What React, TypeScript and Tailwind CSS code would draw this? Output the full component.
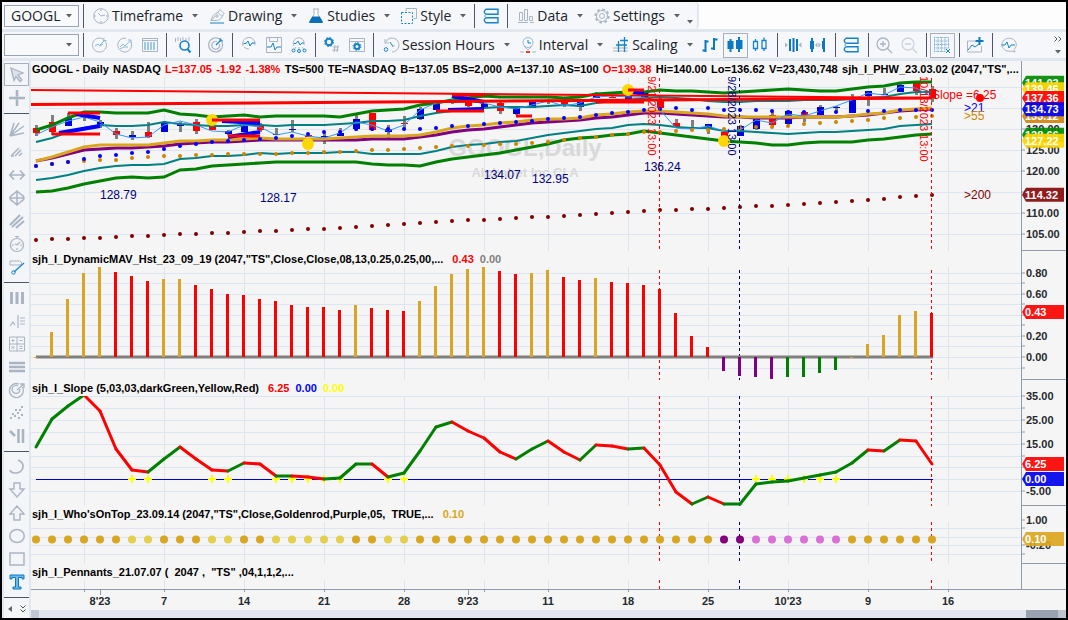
import React from "react";

const GREY = "#aab5c4";
const BLUE = "#1583c9";

// bars are 16px apart
const X = (i: number) => 5 + 16 * i;
const BARS = Array.from({ length: 57 }, (_, i) => i);
const GRID = [3, 8, 13, 18, 23, 28, 32, 37, 42, 47, 52, 57];

const upperGreen = [130, 125, 118, 112, 112, 113, 113, 113, 110, 114, 115, 117, 116, 115, 117, 116, 116, 116, 116, 117, 114, 111, 110, 109, 105, 103, 100, 98, 96, 97, 97, 97, 97, 98, 97, 94, 93, 92, 92, 90, 91, 91, 92, 93, 92, 91, 90, 89, 90, 91, 91, 89, 87, 86, 83, 82, 82];
const upperTeal = [142, 138, 132, 128, 125, 126, 126, 125, 122, 124, 125, 126, 126, 125, 125, 126, 125, 125, 125, 124, 123, 121, 121, 120, 116, 113, 111, 109, 108, 107, 107, 107, 106, 105, 106, 103, 101, 100, 98, 97, 98, 99, 101, 102, 102, 101, 101, 101, 100, 100, 100, 99, 98, 97, 94, 92, 92];
const gold = [161, 157, 152, 147, 145, 145, 145, 145, 143, 141, 141, 140, 140, 139, 138, 139, 139, 139, 139, 138, 137, 136, 136, 136, 135, 132, 128, 126, 125, 123, 122, 120, 119, 119, 118, 115, 114, 112, 111, 111, 112, 113, 114, 116, 117, 117, 117, 117, 117, 117, 117, 116, 114, 113, 110, 109, 108];
const purple = [161, 158, 154, 150, 149, 148, 148, 147, 146, 144, 143, 142, 142, 141, 140, 140, 140, 140, 140, 140, 140, 139, 139, 139, 137, 135, 132, 130, 129, 127, 125, 123, 122, 121, 120, 118, 117, 115, 113, 113, 114, 115, 116, 117, 117, 118, 118, 118, 117, 117, 117, 116, 115, 113, 111, 110, 109];
const lowerTeal = [180, 178, 175, 171, 168, 166, 165, 165, 164, 159, 158, 156, 156, 155, 153, 154, 153, 153, 153, 152, 152, 154, 154, 154, 154, 151, 147, 145, 144, 142, 141, 138, 135, 133, 131, 129, 128, 125, 124, 125, 127, 128, 128, 131, 131, 132, 133, 134, 133, 132, 132, 131, 130, 129, 126, 125, 124];
const lowerGreen = [192, 191, 188, 184, 181, 178, 177, 178, 177, 170, 169, 166, 165, 164, 163, 162, 162, 162, 162, 162, 162, 164, 165, 165, 166, 162, 159, 157, 155, 153, 150, 147, 144, 140, 138, 137, 135, 134, 131, 133, 135, 137, 139, 141, 142, 143, 145, 145, 143, 142, 142, 142, 140, 139, 137, 135, 134];
const closeLine = [135, 127, 121, 117, 122, 134, 138, 137, 125, 121, 125, 131, 132, 125, 127, 135, 132, 136, 138, 133, 122, 125, 131, 125, 110, 103, 100, 101, 103, 107, 109, 105, 101, 106, 103, 97, 96, 97, 97, 110, 128, 129, 126, 131, 130, 120, 123, 114, 116, 111, 106, 100, 93, 95, 87, 88, 97];
const dots21 = [166, 164, 162, 159, 156, 155, 153, 152, 149, 146, 144, 142, 141, 140, 139, 138, 136, 134, 132, 132, 129, 129, 129, 129, 129, 128, 126, 126, 124, 123, 122, 121, 119, 118, 117, 115, 113, 112, 110, 109, 108, 110, 108, 110, 110, 110, 111, 112, 112, 112, 112, 111, 111, 111, 110, 110, 110];
const dots55 = [166, 164, 162, 161, 160, 160, 158, 157, 156, 156, 155, 155, 154, 154, 154, 154, 153, 153, 152, 152, 151, 150, 150, 149, 148, 147, 146, 146, 145, 144, 144, 143, 142, 140, 138, 137, 135, 134, 132, 132, 131, 130, 130, 129, 128, 127, 127, 126, 124, 123, 122, 121, 120, 118, 118, 117, 116];
const dots200 = [240, 239, 239, 238, 238, 237, 236, 236, 235, 234, 234, 233, 233, 232, 231, 231, 230, 229, 229, 228, 227, 226, 225, 224, 223, 222, 221, 220, 220, 219, 218, 217, 217, 216, 215, 214, 213, 212, 211, 210, 210, 209, 209, 208, 207, 206, 206, 205, 204, 203, 202, 201, 200, 199, 197, 196, 195];

// [bar, up?, body top, body bottom, wick top, wick bottom]
const candles: number[][] = [
  [0, 0, 128, 133, 125, 136], [1, 0, 122, 132, 115, 135], [2, 1, 118, 126, 113, 126], [3, 0, 114, 116, 113, 121],
  [4, 1, 122, 125, 120, 128], [5, 0, 131, 135, 128, 139], [6, 1, 135, 137, 131, 140], [7, 0, 132, 137, 122, 138],
  [8, 1, 123, 132, 121, 132], [9, 1, 124, 126, 122, 132], [10, 0, 122, 131, 119, 134], [11, 0, 125, 130, 125, 130],
  [12, 1, 131, 134, 130, 135], [13, 1, 125, 132, 125, 132], [14, 0, 125, 130, 123, 132], [15, 1, 134, 135, 128, 135],
  [16, 1, 129, 130, 120, 132], [17, 0, 135, 137, 134, 137], [18, 1, 136, 137, 133, 144], [19, 1, 133, 136, 128, 136],
  [20, 1, 119, 129, 113, 131], [21, 0, 113, 130, 113, 131], [22, 1, 129, 132, 125, 140], [23, 0, 123, 124, 116, 130],
  [24, 1, 109, 119, 107, 120], [25, 1, 104, 110, 103, 110], [26, 1, 101, 103, 99, 104], [27, 0, 101, 106, 100, 107],
  [28, 1, 104, 107, 103, 107], [29, 0, 103, 111, 102, 114], [30, 1, 107, 114, 106, 115], [31, 1, 102, 108, 100, 108],
  [32, 0, 100, 102, 99, 104], [33, 0, 100, 104, 99, 107], [34, 1, 102, 107, 100, 111], [35, 1, 96, 98, 92, 98],
  [36, 0, 97, 98, 96, 98], [37, 1, 96, 99, 95, 100], [38, 1, 92, 97, 91, 98], [39, 0, 99, 108, 98, 110],
  [40, 0, 123, 127, 119, 127], [41, 0, 127, 129, 120, 129], [42, 1, 124, 128, 124, 134], [43, 0, 132, 137, 132, 137],
  [44, 1, 126, 136, 125, 136], [45, 1, 119, 129, 118, 130], [46, 0, 115, 125, 112, 127], [47, 1, 111, 124, 110, 125],
  [48, 0, 112, 115, 111, 122], [49, 1, 107, 115, 105, 115], [50, 1, 107, 108, 106, 113], [51, 1, 100, 113, 94, 113],
  [52, 1, 91, 96, 91, 106], [53, 1, 94, 95, 88, 95], [54, 1, 85, 92, 84, 92], [55, 0, 83, 91, 83, 95], [56, 0, 89, 98, 86, 102],
];

// histogram bar ends, zero line sits at 357
const hist = [357, 332, 299, 273, 266, 272, 276, 281, 279, 279, 285, 289, 294, 295, 299, 301, 305, 307, 307, 310, 305, 308, 310, 311, 301, 286, 274, 269, 266, 271, 274, 273, 270, 277, 280, 278, 282, 283, 285, 289, 313, 336, 347, 371, 376, 377, 379, 377, 377, 373, 370, 357, 344, 335, 315, 311, 313];
const histColors = "ggggg" + "rrr" + "gg" + "rrrrrrrrrr" + "g" + "rrr" + "ggggg" + "rr" + "gg" + "rr" + "g" + "rrrrrrr" + "pppp" + "dddd" + "ggggg" + "r";
const COLORS: Record<string, string> = { g: "#daa520", r: "#ff0000", p: "#800080", d: "#008000" };

const slope = [447, 419, 406, 395, 411, 449, 470, 472, 459, 447, 459, 470, 471, 463, 464, 476, 476, 477, 479, 478, 464, 464, 477, 473, 451, 427, 422, 431, 438, 452, 459, 449, 441, 452, 460, 445, 446, 449, 448, 465, 492, 504, 497, 504, 504, 484, 482, 481, 478, 475, 472, 463, 450, 451, 440, 441, 464];
const weak = [6, 7, 11, 12, 15, 16, 17, 18, 19, 22, 23];
const crosses = [...weak, 45, 46, 47, 48, 49, 50];

const line = (ys: number[]) => ys.map((y, i) => `${X(i)},${y}`).join(" ");
const priceY = (p: number) => 150 + (125 - p) * 4.2;

function topColor(i: number) {
  if (weak.includes(i)) return "#e4d04e";
  if (i === 43 || i === 44) return "#800080";
  if (i >= 45 && i <= 50) return "#da70d6";
  return "#daa520";
}

const icons: Record<string, React.ReactNode> = {
  clock: (
    <g fill="none" stroke={GREY}>
      <circle cx="8" cy="8" r="7.3" />
      <path d="M8 1v2M8 13v2M1 8h2M13 8h2M5 5l3 3 4-1" />
    </g>
  ),
  pen: (
    <g fill="none" stroke={GREY}>
      <path d="M2 12.5c1-4 3-7 7-8l4 4c-1 3-3 4-7 4zM9 4.500l2-3 4 4-2 3M2 12.500l5-5" />
      <circle cx="8" cy="8" r="1.200" />
      <path d="M1 15h14" stroke={BLUE} />
    </g>
  ),
  flask: (
    <g>
      <path d="M5 1h6M6 1v5.500L2 14h12l-4-7.500V1" fill="#fff" stroke={GREY} />
      <path d="M4.300 8.500h7.400L15 14q0 1-1 1H2q-1 0-1-1z" fill="#0a6fb8" />
    </g>
  ),
  style: (
    <g fill="none">
      <path d="M5 3.500V.5h10.500v10h-3" stroke={GREY} />
      <path d="M.5 4.500h11v11H.5z" stroke={BLUE} strokeDasharray="2 1.500" />
    </g>
  ),
  stack: (
    <g fill="none" stroke={BLUE} strokeWidth="1.400">
      <path d="M3 1.200h12v5H3Q-.5 3.700 3 1.200zM3 9.800h12v5H3Q-.5 12.300 3 9.800z" />
      <path d="M3 6.200Q1 8 3 9.800" stroke="#7fb9de" />
    </g>
  ),
  data: (
    <g fill="none" stroke={GREY}>
      <path d="M1.500 12.500v-8h3v8zM6.500 12.500v-11h3v11zM11.500 12.500v-4h3v4zM0 14.500h10M12 14.500h4" />
    </g>
  ),
  gear: (
    <g fill="none" stroke={GREY}>
      <circle cx="8" cy="8" r="6.600" strokeWidth="2" strokeDasharray="2.600 2.580" />
      <circle cx="8" cy="8" r="5.500" />
      <circle cx="8" cy="8" r="2.500" />
    </g>
  ),
  target: (
    <g fill="none" stroke={GREY}>
      <path d="M13.500 4.500A7 7 0 1 1 11 2" />
      <path d="M3 9l3-2 2 2 3-2" stroke="#7fb9de" />
      <path d="M8 8l5-5M12 1l-.5 3 3-.5" stroke="#7fb9de" />
    </g>
  ),
  trend: (
    <g fill="none" stroke={GREY}>
      <path d="M14 5A7 7 0 1 1 9 1.200" />
      <path d="M3 10l3-3 2 2 6-6M11 3h3v3M3 12l4-2 4 0" stroke="#8cbddd" />
    </g>
  ),
  table: (
    <g fill="none" stroke={GREY}>
      <path d="M.5 1.500h15v13H.5zM.5 3.500h15" />
      <path d="M2 6h12M2 8h12M2 10h12M2 12h12" stroke="#7fb9de" strokeWidth="1.300" strokeDasharray="2 1" />
    </g>
  ),
  search: (
    <g fill="none">
      <path d="M.5 1v4M3 0v4M5.500 1v3M8 0v3M11 1v3M14 0v4" stroke={GREY} />
      <circle cx="9.500" cy="8.500" r="4.500" stroke={BLUE} strokeWidth="1.600" />
      <path d="M12.500 12l3 3.500" stroke={BLUE} strokeWidth="2" />
    </g>
  ),
  scope: (
    <g fill="none" stroke={GREY} strokeWidth="1.200">
      <path d="M14 5A7 7 0 1 1 11 1.800M11.500 7A4 4 0 1 1 9 4.500" />
      <path d="M8 8l5.500-5.500M12 1l0 3 3 0" stroke={BLUE} />
    </g>
  ),
  pulse: (
    <g fill="none">
      <path d="M2 9a6.300 6.300 0 1 1 12-1M3 10q2 2 5 2" stroke={GREY} />
      <path d="M2.500 6.500H5L7 4l2 5 2-3h3" stroke={BLUE} />
    </g>
  ),
  chartBox: (
    <g fill="none">
      <path d="M.5.500h15v15H.5zM3.500.500v4h8v-4" stroke={GREY} />
      <path d="M1 10h4l2-4 2 7 2-3h4" stroke={BLUE} />
    </g>
  ),
  network: (
    <g fill="none">
      <path d="M3 9a5.500 5.500 0 1 1 10-1M8 10v3M5 10l-2 3M11 10l2 3" stroke={GREY} />
      <path d="M3 6.500h2L7 4l2 4 2-2h2" stroke={BLUE} />
      <g stroke={BLUE}><circle cx="2.500" cy="13.500" r="1.500" /><circle cx="8" cy="14" r="1.500" /><circle cx="13.500" cy="13.500" r="1.500" /></g>
    </g>
  ),
  gearHash: (
    <g fill="none">
      <circle cx="5" cy="5" r="3.200" stroke={BLUE} strokeWidth="2" />
      <circle cx="5" cy="5" r="4.500" stroke={BLUE} strokeDasharray="1.800 1.730" />
      <path d="M11 8l-1 7M14 8l-1 7M9 10h6M8.500 13h6" stroke={GREY} />
    </g>
  ),
  gearBox: (
    <g fill="none">
      <path d="M.5 1.500h15v13H.5zM.5 4.500h15" stroke={GREY} />
      <circle cx="8" cy="9.500" r="2.500" stroke={BLUE} strokeWidth="2" />
      <circle cx="8" cy="9.500" r="3.900" stroke={BLUE} strokeDasharray="1.500 1.560" />
    </g>
  ),
  session: (
    <g fill="none" stroke={GREY}>
      <path d="M2 2v4h4M2.500 5.500A7 7 0 1 1 9 15" />
      <path d="M7 5l3 4.500 1-1" stroke={BLUE} />
      <circle cx="3" cy="12.500" r="1.800" stroke={BLUE} />
    </g>
  ),
  interval: (
    <g fill="none">
      <circle cx="8" cy="5.500" r="5" stroke="#9dbad0" />
      <path d="M8 3v3h3" stroke={BLUE} />
      <path d="M4 9l4 4 4-4M0 15h4M12 15h4" stroke={GREY} />
      <path d="M6 15h4" stroke="#e04030" strokeWidth="2" />
    </g>
  ),
  scaling: (
    <g fill="none" stroke={GREY}>
      <path d="M0 11h15M0 14h15" />
      <path d="M5.500 4v11M11.500 0v15M3 8h11M7 3.500h8" stroke={BLUE} strokeWidth="1.300" />
    </g>
  ),
  bars: <path d="M3.500 3v12M.5 13.500h3M3.500 4.500h3M12 1v12M9 11.500h3M12 2.500h3.500" stroke="#0a78c2" strokeWidth="2" fill="none" />,
  candlesSolid: <path d="M.5 4h2V2h2v2h2v8h-2v3h-2v-3h-2zM9 3h2V0h2v3h2.500v9H13v3h-2v-3H9z" fill="#0a78c2" />,
  candlesHollow: <path d="M1.500 4.500h4v7h-4zM3.500 2v2.500M3.500 11.500V14M10 3.500h4v8h-4zM12 .5v3M12 11.500V14" stroke={BLUE} fill="none" strokeWidth="1.300" />,
  squeeze: (
    <g fill="#0a78c2">
      <path d="M4 2h2v12H4zM7.500 1h2v14h-2zM11 2h2v12h-2z" />
      <path d="M0 5.500L3 8l-3 2.500zM16.500 5.500l-3 2.500 3 2.500z" fill={GREY} />
    </g>
  ),
  expand: (
    <g fill="#0a78c2">
      <path d="M1 1h2v3h1v8H3v3H1v-3H0V4h1zM13 1h2v14h-2v-3h-1V4h1z" />
      <path d="M5 8l2.500-2.500v5zM11 8L8.500 5.500v5z" fill={GREY} />
    </g>
  ),
  zoomIn: <path d="M13 7A6 6 0 1 1 1 7a6 6 0 0 1 12 0zM11.500 11.500L16 16M4 7h6M7 4v6" stroke={GREY} strokeWidth="1.300" fill="none" />,
  zoomOut: <path d="M13 7A6 6 0 1 1 1 7a6 6 0 0 1 12 0zM11.500 11.500L16 16M4 7h6" stroke="#ccd3dc" strokeWidth="1.300" fill="none" />,
  gridBox: (
    <g fill="none" strokeDasharray="1.500 .5">
      <path d="M0 .5h15M0 4h15M0 7.500h15M0 11h15M0 14.500h11M.5 0v15M4 0v15M7.500 0v15M11 0v15M14.500 0v11" stroke="#8db9da" />
      <path d="M12 12l4 4M16 12l-4 4" stroke={BLUE} strokeDasharray="none" />
    </g>
  ),
  addChart: (
    <g fill="none">
      <path d="M.5 4v11h14V9M.5 4h8" stroke={GREY} />
      <path d="M1 13l4-5 3 2 4-3" stroke={BLUE} />
      <path d="M12.500 0v8M8.500 4h8" stroke="#0a78c2" strokeWidth="2" />
    </g>
  ),
  bubble: (
    <g fill="none">
      <path d="M14 12.500A7.200 6.500 0 1 0 11 14l4 1z" stroke={GREY} />
      <path d="M1.500 8H5l2-3 2 6 2-3h4" stroke={BLUE} />
    </g>
  ),
  pointer: <path d="M2 1l12 5-5 2 4 5-2 1.500-4-5-2 4z" fill="#dde2ea" stroke={GREY} strokeWidth="1.300" />,
  plus: <path d="M8 0v6.500M8 9.500V16M0 8h6.500M9.500 8H16M6.500 8h3" stroke={GREY} strokeWidth="2.600" />,
  fan: <path d="M1 15L5 2M1 15L10 2M1 15L15 5M1 15l14-3" stroke={GREY} strokeWidth="1.500" fill="none" />,
  speed: <path d="M2 12l8-8M6 12l6-6M10 12l3-3M2 12h3" stroke={GREY} strokeWidth="1.500" fill="none" />,
  horiz: <path d="M1 8h14M5 3.500L.8 8 5 12.500M11 3.500L15.200 8 11 12.500" stroke={GREY} strokeWidth="1.700" fill="none" />,
  vert: <path d="M8 1v14M4 4.500L8 1l4 3.500M4 11.500L8 15l4-3.500M4 4.500Q1 6 1 8h14q0-2-3-3.500M1 8q0 2 3 3.500M15 8q0 2-3 3.500" stroke={GREY} strokeWidth="1.500" fill="none" />,
  parallel: <path d="M1 12L11 2M3 14L14 4M7 15l8-7" stroke={GREY} strokeWidth="2" fill="none" />,
  stopwatch: <path d="M8 2.500a6.500 6.500 0 1 1-.1 0M8 0v3M6 .5h4M8 9l3-3M3 9h2M11 9h2M8 12v2M6 8l2 1" stroke={GREY} strokeWidth="1.200" fill="none" />,
  marker: (
    <g fill="none">
      <path d="M1 2h10l2 2-2 2H1z" stroke={GREY} />
      <path d="M15 4L5 13" stroke={BLUE} strokeWidth="1.300" />
      <circle cx="4.500" cy="13.500" r="1.700" stroke={BLUE} />
    </g>
  ),
  columns: <path d="M2.500 2v12M8 2v12M13.500 2v12" stroke={GREY} strokeWidth="3" />,
  waves: <path d="M1 13l3-4 2 3M9 2v13M11 5h5M11 8h5M11 11h5" stroke={GREY} strokeWidth="1.200" fill="none" />,
  calc: <path d="M.5 1h15v14H.5zM8 1v14M.5 8h15M2.500 4.500h3M4 3v3M10.500 4.500h3M2.500 10l3 3M5.500 10l-3 3M10.500 10.500h3M10.500 12.500h3" stroke={GREY} fill="none" />,
  rows: <path d="M0 4h16M0 8h16M0 12h16" stroke={GREY} strokeWidth="2.300" />,
  arcs: <path d="M13.500 5A7 7 0 1 1 10 2M11 7a4 4 0 1 1-2-3M8 8l7-6M11 2h4v4" stroke={GREY} strokeWidth="1.300" fill="none" />,
  scatter: <path d="M1 13h2M5 11h2M9 13h2M3 9h2M8 8h2M12 10h2M6 5h2M10 5h2M12 2h2" stroke={GREY} strokeWidth="2" />,
  slashBars: <path d="M1 3l5 5M9.500 1v14M14 1v14" stroke={GREY} strokeWidth="2.500" />,
  arc: <path d="M9 1c8 3 6 13-3 13q-4 0-5-3" stroke={GREY} strokeWidth="1.700" fill="none" />,
  down: <path d="M5 1h6v6h4l-7 8-7-8h4z" stroke={GREY} strokeWidth="1.400" fill="none" />,
  up: <path d="M5 15h6V9h4L8 1 1 9h4z" stroke={GREY} strokeWidth="1.400" fill="none" />,
  ellipse: <ellipse cx="8" cy="8" rx="7.200" ry="6.500" stroke={GREY} strokeWidth="1.500" fill="none" />,
  rect: <path d="M1 2h14v12H1z" stroke={GREY} strokeWidth="1.500" fill="none" />,
  type: <path d="M1 1h14v4h-2V3.500H9.500V13H12v2H4v-2h2.500V3.500H3V5H1z" fill="#6db8ea" stroke="#0a78c2" />,
};

function Icon({ name }: { name: string }) {
  return (
    <svg width="16" height="16" viewBox="0 0 16 16" className="shrink-0 overflow-visible" aria-hidden="true">
      {icons[name]}
    </svg>
  );
}

function Caret() {
  return (
    <svg width="6" height="4" viewBox="0 0 6 4" className="shrink-0" aria-hidden="true">
      <path d="M0 0h6L3 3.500z" fill="#5b6068" />
    </svg>
  );
}

function MenuButton({ icon, label }: { icon: string; label: string }) {
  return (
    <button className="flex h-full items-center whitespace-nowrap text-sm text-[#20242a]">
      <Icon name={icon} />
      <span className="ml-[3px] mr-[9px]">{label}</span>
      <Caret />
    </button>
  );
}

function IconButton({ icon, active }: { icon: string; active?: boolean }) {
  return (
    <button
      aria-label={icon}
      className={`flex h-[25px] w-[25px] shrink-0 items-center justify-center ${active ? "border border-[#a5afbd]" : ""}`}
    >
      <Icon name={icon} />
    </button>
  );
}

function Divider() {
  return <span className="ml-1 mr-[3px] h-6 w-px shrink-0 bg-[#4c5666]" />;
}

function Combo({ label, value }: { label: string; value: string }) {
  return (
    <div className="relative ml-[2px] h-[22px] w-[75px] shrink-0">
      <select
        aria-label={label}
        defaultValue={value}
        className="block h-full w-full appearance-none border border-[#9aa3b1] bg-[#f8f9fb] pl-[6px] text-sm leading-5 text-[#20242a]"
      >
        <option>{value}</option>
      </select>
      <span className="pointer-events-none absolute right-[7px] top-[9px] flex">
        <Caret />
      </span>
    </div>
  );
}

function Title({ children }: { children: React.ReactNode }) {
  return <div className="flex h-4 items-center whitespace-pre pl-px text-[11px] font-bold text-black">{children}</div>;
}

function GridLines({ rows = [] }: { rows?: number[] }) {
  return (
    <g stroke="#dde5f2" shapeRendering="crispEdges">
      {rows.map((y) => (
        <line key={y} x1="0" x2="100%" y1={y} y2={y} />
      ))}
      {GRID.map((i) => (
        <line key={i} x1={X(i)} x2={X(i)} y1="0" y2="620" />
      ))}
    </g>
  );
}

function Sessions() {
  return (
    <g strokeDasharray="3 3" strokeWidth="1">
      <line x1={X(39) - 0.5} x2={X(39) - 0.5} y1="0" y2="620" stroke="#f00" />
      <line x1={X(44) - 0.5} x2={X(44) - 0.5} y1="0" y2="620" stroke="#000080" />
      <line x1={X(56) - 0.5} x2={X(56) - 0.5} y1="0" y2="620" stroke="#f00" />
    </g>
  );
}

interface AxisProps {
  top: number;
  height: number;
  ticks: [number, string][];
  flags?: [number, string, string][];
}

function Axis({ top, height, ticks, flags = [] }: AxisProps) {
  return (
    <div className="w-[45px] shrink-0 overflow-hidden border-b border-l border-[#8f9aab]">
      <svg height={height - 1} className="block w-full text-[11px] font-bold">
        <g transform={`translate(0 ${-top})`}>
          {ticks.map(([y, label]) => (
            <g key={y}>
              <line x1="0" x2="3" y1={y} y2={y} stroke="#8f9aab" />
              <text x="4" y={y + 4} fill="#26292e">{label}</text>
            </g>
          ))}
          {flags.map(([y, label, color]) => (
            <g key={label}>
              <path d={`M0 ${y}l4-7h38v14H4z`} fill={color} opacity=".92" />
              <text x="3" y={y + 4} fill="#fff">{label}</text>
            </g>
          ))}
        </g>
      </svg>
    </div>
  );
}

function Dots({ ys, color, r = 2 }: { ys: number[]; color: string; r?: number }) {
  return (
    <g fill={color}>
      {ys.map((y, i) => (
        <circle key={i} cx={X(i)} cy={y} r={r} />
      ))}
    </g>
  );
}

function PricePane() {
  return (
    <section className="flex">
      <div className="min-w-0 flex-1 overflow-hidden">
        <Title>
          <div className="flex w-full justify-between gap-[4px] pr-[2px]">
            <span>GOOGL - Daily</span>
            <span>NASDAQ</span>
            <span className="text-[#f00]">L=137.05</span>
            <span className="text-[#f00]">-1.92</span>
            <span className="text-[#f00]">-1.38%</span>
            <span>TS=500</span>
            <span>TE=NASDAQ</span>
            <span>B=137.05</span>
            <span>BS=2,000</span>
            <span>A=137.10</span>
            <span>AS=100</span>
            <span className="text-[#f00]">O=139.38</span>
            <span>Hi=140.00</span>
            <span>Lo=136.62</span>
            <span>V=23,430,748</span>
            <span>sjh_I_PHW_23.03.02 (2047,"TS",...</span>
          </div>
        </Title>
        <svg className="block h-[174px] w-full text-xs">
          <g transform="translate(0 -77)">
            <GridLines rows={[87, 108, 129, 150, 171, 192, 213, 234]} />
            <g fill="#d9d9d9" fontWeight="bold" textAnchor="middle">
              <text x="494" y="156" fontSize="24">GOOGL,Daily</text>
              <text x="494" y="177" fontSize="13">Alphabet Inc Cl A</text>
            </g>
            {candles.map(([i, up, t, b, wt, wb]) => (
              <g key={i}>
                <rect x={X(i) - 1} y={wt} width="3" height={wb - wt} fill="#808080" />
                <rect x={X(i) - 3} y={t} width="7" height={b - t} fill={up ? "#0000dc" : "#f00"} />
              </g>
            ))}
            <g fill="none">
              <polyline points={line(upperGreen)} stroke="#008000" strokeWidth="3" />
              <polyline points={line(upperTeal)} stroke="#008080" strokeWidth="2" />
              <polyline points={line(lowerTeal)} stroke="#008080" strokeWidth="2" />
              <polyline points={line(lowerGreen)} stroke="#008000" strokeWidth="3" />
              <polyline points={line(purple)} stroke="#800080" strokeWidth="3" />
              <polyline points={line(gold)} stroke="#daa520" strokeWidth="3" />
              <polyline points={line(closeLine)} stroke="#3398ff" strokeWidth="1" />
            </g>
            <g stroke="#0000ff" strokeWidth="4">
              <path d="M45 114L69 118M28 133L69 126M191 121L229 123M197 137L229 132M421 96L453 102M417 110L453 109M597 91L613 94" />
            </g>
            <g stroke="#f00" strokeWidth="3">
              <path d="M37 113H69M21 134H69M197 136H229M421 95H453M405 111H453M485 116H501M565 102H613" />
              <path d="M0 104.500L901 98" />
              <path d="M0 90L901 98" strokeWidth="2" />
            </g>
            <Dots ys={dots55} color="#cd8500" />
            <Dots ys={dots21} color="#0000ff" />
            <Dots ys={dots200} color="#800000" />
            <g fill="#ffd700">
              <circle cx="181" cy="120" r="6" />
              <circle cx="277" cy="144" r="6" />
              <circle cx="597" cy="90" r="6" />
              <circle cx="693" cy="141" r="6" />
            </g>
            <path d="M181 120H229M597 90H613" stroke="#f00" strokeWidth="3" />
            <Sessions />
            <g fontSize="11">
              <text transform="translate(617 76) rotate(90)" fill="#f00">9/21/2023 13:00</text>
              <text transform="translate(697 76) rotate(90)" fill="#000080">9/28/2023 13:00</text>
              <text transform="translate(889 76) rotate(90)" fill="#f00">10/13/2023 13:00</text>
            </g>
            <g fill="#000080">
              <text x="69" y="199">128.79</text>
              <text x="229" y="202">128.17</text>
              <text x="453" y="179">134.07</text>
              <text x="501" y="183">132.95</text>
              <text x="613" y="171">136.24</text>
            </g>
            <circle cx="949" cy="98" r="4" fill="#f00" />
            <text x="901" y="99" fill="#f00">Slope =6.25</text>
            <text x="933" y="112" fill="#0000ff">&gt;21</text>
            <text x="933" y="120" fill="#cd8500">&gt;55</text>
            <text x="933" y="199" fill="#800000">&gt;200</text>
          </g>
        </svg>
      </div>
      <Axis
        top={61}
        height={190}
        ticks={[[129, "130.00"], [150, "125.00"], [171, "120.00"], [192, ""], [213, "110.00"], [234, "105.00"]]}
        flags={[
          [priceY(133.12), "133.12", "#cd850e"],
          [priceY(141.03), "141.03", "#008a00"],
          [priceY(139.46), "139.46", "#ffd700"],
          [priceY(137.36), "137.36", "#ff0000"],
          [priceY(134.73), "134.73", "#0000ee"],
          [priceY(128.66), "128.66", "#008a00"],
          [priceY(127.22), "127.22", "#ffd700"],
          [priceY(114.32), "114.32", "#870a0a"],
        ]}
      />
    </section>
  );
}

function HistogramPane() {
  const rows = [273, 283, 294, 304, 315, 325, 336, 346, 357, 368];
  const labels: Record<number, string> = { 273: "0.80", 294: "0.60", 336: "0.20", 357: "0.00" };
  return (
    <section className="flex">
      <div className="min-w-0 flex-1 overflow-hidden">
        <Title>
          sjh_I_DynamicMAV_Hst_23_09_19 (2047,"TS",Close,Close,08,13,0.25,0.25,00,...
          <span className="ml-[9px] text-[#f00]">0.43</span>
          <span className="ml-[6px] text-[#808080]">0.00</span>
        </Title>
        <svg className="block h-[113px] w-full">
          <g transform="translate(0 -267)">
            <GridLines rows={rows} />
            <Sessions />
            <path d="M5 357H902" stroke="#808080" strokeWidth="3" />
            {BARS.map((i) => (
              <rect
                key={i}
                x={X(i) - 2}
                y={Math.min(hist[i], 357)}
                width="3"
                height={Math.max(Math.abs(hist[i] - 357), 1)}
                fill={COLORS[histColors[i]]}
              />
            ))}
          </g>
        </svg>
      </div>
      <Axis top={251} height={129} ticks={rows.map((y) => [y, labels[y] ?? ""])} flags={[[312, "0.43", "#ff0000"]]} />
    </section>
  );
}

function SlopePane() {
  const rows = [396, 408, 420, 432, 444, 456, 467, 479, 491];
  const labels: Record<number, string> = { 396: "35.00", 420: "25.00", 444: "15.00", 491: "-5.00" };
  return (
    <section className="flex">
      <div className="min-w-0 flex-1 overflow-hidden">
        <Title>
          sjh_I_Slope (5,03,03,darkGreen,Yellow,Red)
          <span className="ml-[9px] text-[#f00]">6.25</span>
          <span className="ml-[6px] text-[#00f]">0.00</span>
          <span className="ml-[6px] text-[#ff0]">0.00</span>
        </Title>
        <svg className="block h-[110px] w-full">
          <g transform="translate(0 -396)">
            <GridLines rows={rows} />
            <Sessions />
            <path d="M5 479.500H902" stroke="#0000d0" />
            {crosses.map((i) => (
              <path key={i} d={`M${X(i) - 4} 479h8M${X(i)} 475v8`} stroke="#ff0" strokeWidth="2" />
            ))}
            {slope.slice(1).map((y, i) => (
              <line
                key={i}
                x1={X(i)}
                y1={slope[i]}
                x2={X(i + 1)}
                y2={y}
                stroke={y <= slope[i] ? "#008000" : "#f00"}
                strokeWidth="3"
                strokeLinecap="round"
              />
            ))}
          </g>
        </svg>
      </div>
      <Axis
        top={380}
        height={126}
        ticks={rows.map((y) => [y, labels[y] ?? ""])}
        flags={[[464, "6.25", "#ff0000"], [479, "0.00", "#0000ee"]]}
      />
    </section>
  );
}

function TopPane() {
  return (
    <section className="flex">
      <div className="min-w-0 flex-1 overflow-hidden">
        <Title>
          {'sjh_I_Who\'sOnTop_23.09.14 (2047,"TS",Close,Goldenrod,Purple,05,  TRUE,...'}
          <span className="ml-[9px] text-[#daa520]">0.10</span>
        </Title>
        <svg className="block h-[42px] w-full">
          <g transform="translate(0 -522)">
            <GridLines rows={[528, 537, 545, 554]} />
            <Sessions />
            {BARS.map((i) => (
              <circle key={i} cx={X(i)} cy="539.500" r="4" fill={topColor(i)} />
            ))}
          </g>
        </svg>
      </div>
      <Axis top={506} height={58} ticks={[[520, "1.00"], [528, ""], [545, "-0.20"], [554, ""]]} flags={[[539, "0.10", "#daa520"]]} />
    </section>
  );
}

function PennantsPane() {
  return (
    <section className="flex">
      <div className="min-w-0 flex-1 overflow-hidden">
        <Title>{'sjh_I_Pennants_21.07.07 (  2047 ,  "TS" ,04,1,1,2,...'}</Title>
        <svg className="block h-[9px] w-full">
          <GridLines />
          <Sessions />
        </svg>
      </div>
      <div className="w-[45px] shrink-0 border-l border-[#8f9aab]" />
    </section>
  );
}

const dates: [number, string][] = [
  [4, "8'23"], [8, "7"], [13, "14"], [18, "21"], [23, "28"], [27, "9'23"],
  [32, "11"], [37, "18"], [42, "25"], [47, "10'23"], [52, "9"], [57, "16"],
];

function TimeAxis() {
  return (
    <div className="border-t border-[#8f9aab]">
      <svg className="block h-5 w-full text-[11px] font-bold">
        <path d={`M${X(4)}.5 0v5M${X(27)}.5 0v5`} stroke="#8f9aab" />
        {GRID.map((i) => (
          <line key={i} x1={X(i) + 0.5} x2={X(i) + 0.5} y1="0" y2="2" stroke="#8f9aab" />
        ))}
        {dates.map(([i, label]) => (
          <text key={label} x={X(i)} y="15" textAnchor="middle" fill="#26292e">{label}</text>
        ))}
      </svg>
    </div>
  );
}

const tools = [
  ["pointer", "plus"],
  ["fan", "speed", "horiz", "vert", "parallel", "stopwatch", "marker"],
  ["columns", "waves", "calc", "rows", "arcs", "scatter", "slashBars"],
  ["arc", "down", "up", "ellipse", "rect", "type"],
];

export default function App() {
  return (
    <div className="flex min-h-screen flex-col overflow-hidden border-2 border-black bg-[#e1e7ef] font-['Liberation_Sans',Arial,sans-serif]">
      <header className="font-['Open_Sans','Noto_Sans',sans-serif]">
        <div className="flex h-[30px] border-b-3 border-[#e1e7ef] bg-[#fdfdfd]">
          <div className="flex items-center rounded-r-sm border-r-2 border-[#e1e7ef] bg-[#f5f7fa]">
            <Combo label="Symbol" value="GOOGL" />
            <Divider />
            <nav className="ml-[6px] flex h-full items-center gap-[11px]">
              <MenuButton icon="clock" label="Timeframe" />
              <MenuButton icon="pen" label="Drawing" />
              <MenuButton icon="flask" label="Studies" />
              <MenuButton icon="style" label="Style" />
            </nav>
            <span className="w-1" />
            <Divider />
            <IconButton icon="stack" />
            <Divider />
            <div className="ml-[7px] flex h-full items-center gap-[11px]">
              <MenuButton icon="data" label="Data" />
              <MenuButton icon="gear" label="Settings" />
            </div>
            <span className="mb-[5px] ml-[7px] mr-[4px] self-end">
              <Caret />
            </span>
          </div>
        </div>
        <div className="flex h-[29px] items-center border-b-3 border-[#e1e7ef] bg-[#f5f7fa]">
          <Combo label="Template" value="" />
          <Divider />
          <IconButton icon="target" />
          <IconButton icon="trend" />
          <IconButton icon="table" />
          <Divider />
          <IconButton icon="search" />
          <Divider />
          <IconButton icon="scope" />
          <Divider />
          <IconButton icon="pulse" />
          <IconButton icon="chartBox" />
          <IconButton icon="network" />
          <Divider />
          <IconButton icon="gearHash" />
          <IconButton icon="gearBox" />
          <Divider />
          <div className="ml-[6px] mr-[5px] flex h-full items-center gap-[10px]">
            <MenuButton icon="session" label="Session Hours" />
            <MenuButton icon="interval" label="Interval" />
            <MenuButton icon="scaling" label="Scaling" />
          </div>
          <IconButton icon="bars" />
          <IconButton icon="candlesSolid" active />
          <IconButton icon="candlesHollow" />
          <Divider />
          <IconButton icon="squeeze" />
          <IconButton icon="expand" />
          <Divider />
          <IconButton icon="stack" />
          <Divider />
          <IconButton icon="zoomIn" />
          <IconButton icon="zoomOut" />
          <Divider />
          <IconButton icon="gridBox" active />
          <Divider />
          <IconButton icon="addChart" />
          <Divider />
          <IconButton icon="bubble" />
          <button aria-label="More" className="ml-auto mr-1 flex h-full flex-col items-center justify-between py-1">
            <svg width="8" height="6" viewBox="0 0 8 6" aria-hidden="true">
              <path d="M.5.500L3 3 .5 5.500M4.500.500L7 3 4.500 5.500" stroke="#555" fill="none" />
            </svg>
            <Caret />
          </button>
        </div>
      </header>

      <div className="flex flex-1">
        <aside className="ml-[2px] mr-[2px] flex w-[25px] shrink-0 flex-col bg-[#f3f5f9] pt-[2px]">
          {tools.map((group, g) => (
            <div key={g}>
              {group.map((name) => (
                <button
                  key={name}
                  aria-label={name}
                  className={`flex h-[23px] w-full items-center justify-center ${name === "pointer" ? "border border-[#a5afbd]" : ""}`}
                >
                  <Icon name={name} />
                </button>
              ))}
              <hr className="mb-[3px] mt-1 border-[#4c5666]" />
            </div>
          ))}
          <button aria-label="More tools" className="flex h-4 items-center justify-between pl-1 pr-[3px]">
            <svg width="4" height="6" viewBox="0 0 4 6" aria-hidden="true">
              <path d="M4 0v6L0 3z" fill="#666" />
            </svg>
            <svg width="6" height="8" viewBox="0 0 6 8" aria-hidden="true">
              <path d="M.5.500L3 3 5.500.500M.5 4.500L3 7l2.500-2.500" stroke="#555" fill="none" />
            </svg>
          </button>
        </aside>

        <main className="flex min-w-0 flex-1 flex-col bg-[#f5f5f5]">
          <PricePane />
          <HistogramPane />
          <SlopePane />
          <TopPane />
          <PennantsPane />
          <TimeAxis />
          <div className="mt-auto flex h-2 justify-between bg-[#e0e5ee]">
            <span className="w-2 bg-[#c3c9d4]" />
            <span className="w-10 border-r-8 border-[#bcc3ce] bg-[#98a2b1]" />
          </div>
        </main>
      </div>
    </div>
  );
}
